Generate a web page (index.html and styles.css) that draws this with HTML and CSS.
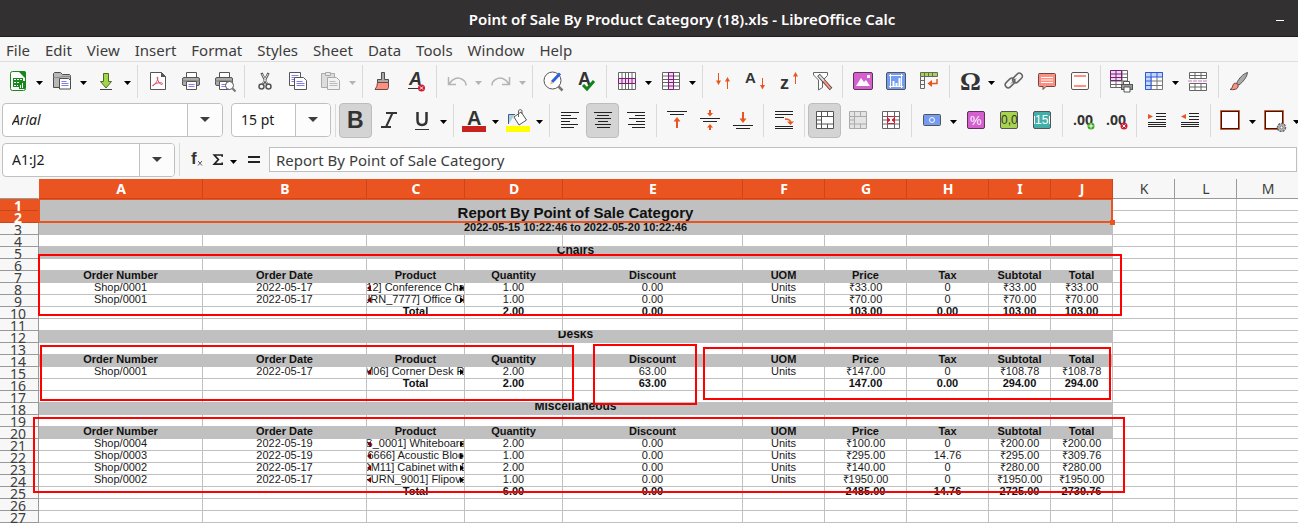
FILE: index.html
```html
<!DOCTYPE html>
<html lang="en">
<head>
<meta charset="utf-8">
<title>Point of Sale By Product Category (18).xls - LibreOffice Calc</title>
<link rel="stylesheet" href="styles.css">
</head>
<body>
<svg class="defs" aria-hidden="true">
<symbol id="dd" viewBox="0 0 11 24"><path d="M2 12h7l-3.500 4z" fill="currentColor"/></symbol>
<symbol id="tri" viewBox="0 0 12 8"><path d="M1 1h10l-5 5z" fill="#3d3d3d"/></symbol>
</svg>
<header class="titlebar">
<h1>Point of Sale By Product Category (18).xls - LibreOffice Calc</h1>
<button class="minimize" aria-label="Minimize"></button>
</header>
<nav class="menubar">
<button>File</button><button>Edit</button><button>View</button><button>Insert</button><button>Format</button><button>Styles</button><button>Sheet</button><button>Data</button><button>Tools</button><button>Window</button><button>Help</button>
</nav>

<div class="toolbar standard" role="toolbar" aria-label="Standard">
<button class="tool" aria-label="New"><svg viewBox="0 0 24 24"><rect x="4.500" y="2.500" width="15" height="19" rx="2" fill="#fff" stroke="#18871c" /><path d="M12 2h6a2 2 0 0 1 2 2v6z" fill="#18871c"/><path d="M7 9h10v3h2v8h-6v-2H7z" fill="#18871c"/><path d="M8 10.500h2m1 0h2m1 0h2M8 13.500h2m1 0h2M8 16.500h2m1 0h1M14.500 19v-3m2 3v-5" stroke="#fff"/></svg></button>
<button class="arrow" aria-label="New options"><svg><use href="#dd"/></svg></button>
<button class="tool" aria-label="Open"><svg viewBox="0 0 24 24"><path d="M3.500 18.500v-14l1-1h6l2 2h7l1 1v12z" fill="#b8b8b8" stroke="#4d4d4d"/><path d="M3.500 8.500h6l2-1h9" fill="none" stroke="#8a8a8a"/><path d="M9.500 9.500h9l2 2v8.500h-11z" fill="#fff" stroke="#4d4d4d"/><path d="M11.500 12.500h5m-5 2h7m-7 2h7" stroke="#8080e8"/></svg></button>
<button class="arrow" aria-label="Open options"><svg><use href="#dd"/></svg></button>
<button class="tool" aria-label="Save"><svg viewBox="0 0 24 24"><path d="M9.500 4.500h5v8h3L12 19l-5.500-6.500h3z" fill="#a4d34e" stroke="#4b6b1f"/><path d="M6 20.500h12" stroke="#444"/></svg></button>
<button class="arrow" aria-label="Save options"><svg><use href="#dd"/></svg></button>
<i class="sep"></i>
<button class="tool" aria-label="Export as PDF"><svg viewBox="0 0 24 24"><path d="M4.500 3.500h11l4 4v13h-15z" fill="#fff" stroke="#555"/><path d="M15 3v5h5z" fill="#555"/><path d="M11 8c2 0 0 6-4 9-1 0 0-2 5-3s5 1 4 1.500-4-2-5-7.500z" fill="none" stroke="#e0475c"/></svg></button>
<button class="tool" aria-label="Print"><svg viewBox="0 0 24 24"><path d="M7.500 8V3.500h10V8" fill="#fff" stroke="#555"/><rect x="3.500" y="8.500" width="17" height="8" rx="1.500" fill="#aaa" stroke="#555"/><path d="M3 12h18" stroke="#777"/><path d="M7.500 12.500h10v8h-10z" fill="#fff" stroke="#555"/><path d="M9.500 15.500h6m-6 2h6" stroke="#8080e8"/></svg></button>
<button class="tool" aria-label="Print preview"><svg viewBox="0 0 24 24"><path d="M7.500 8V3.500h10V8" fill="#fff" stroke="#555"/><rect x="3.500" y="8.500" width="17" height="8" rx="1.500" fill="#aaa" stroke="#555"/><path d="M3 12h18" stroke="#777"/><path d="M7.500 12.500h10v8h-10z" fill="#fff" stroke="#555"/><path d="M9.500 15.500h5m-5 2h5" stroke="#8080e8"/><circle cx="17.500" cy="16.500" r="4" fill="#fff" stroke="#555"/><path d="m20.500 19.500 3 3" stroke="#777" stroke-width="2"/></svg></button>
<i class="sep"></i>
<button class="tool" aria-label="Cut"><svg viewBox="0 0 24 24"><path d="m8.500 4 6 12m1-12-6 12" stroke="#555" stroke-width="2.500"/><path d="m9 5 5.500 10m.5-10-5.500 10" stroke="#ddd"/><circle cx="8.500" cy="17.500" r="2.500" fill="none" stroke="#555" stroke-width="1.500"/><circle cx="15.500" cy="17.500" r="2.500" fill="none" stroke="#555" stroke-width="1.500"/></svg></button>
<button class="tool" aria-label="Copy"><svg viewBox="0 0 24 24"><path d="M3.500 3.500h11v13h-11z" fill="#fff" stroke="#555"/><path d="M5.500 6.500h7m-7 2h3m-3 2h3m-3 2h3" stroke="#8080e8"/><path d="M8.500 8.500h9l3 3v9h-12z" fill="#fff" stroke="#555"/><path d="M10.500 12.500h6m-6 2h8m-8 2h8" stroke="#8080e8"/></svg></button>
<button class="tool" aria-label="Paste" disabled><svg viewBox="0 0 24 24"><path d="M2.500 4.500h13v14h-13z" fill="#ddd" stroke="#aaa"/><path d="M6.500 3.500h5v3h-5z" fill="#e8e8e8" stroke="#aaa"/><path d="M8.500 8.500h9l3 3v9h-12z" fill="#f2f2f2" stroke="#aaa"/><path d="M10.500 12.500h6m-6 2h8m-8 2h8" stroke="#bbb"/></svg></button>
<button class="arrow" aria-label="Paste options" disabled><svg><use href="#dd"/></svg></button>
<i class="sep"></i>
<button class="tool" aria-label="Clone formatting"><svg viewBox="0 0 24 24"><path d="M10.500 3.500h3v7h4v3h-11v-3h4z" fill="#aaa" stroke="#4d4d4d"/><path d="M6.500 13.500h11v5l-1 2H4q2.500-3 2.500-7z" fill="#ff8f80" stroke="#6b4a46"/></svg></button>
<button class="tool" aria-label="Clear formatting"><svg viewBox="0 0 24 24"><text x="5" y="16" class="glyph bi" font-size="18">A</text><path d="M4 19.500h11" stroke="#333"/><circle cx="17.500" cy="19" r="3.500" fill="#cc1f36"/><path d="m16 17.500 3 3m0-3-3 3" stroke="#fff"/></svg></button>
<i class="sep"></i>
<button class="tool" aria-label="Undo" disabled><svg viewBox="0 0 24 24"><path d="M3.500 8v7.500H11M4.500 14.500c3-5 8-7 13-4 2 1 3.500 3 3.500 6" fill="none" stroke="#b4b4b4" stroke-width="1.500"/></svg></button>
<button class="arrow" aria-label="Undo history" disabled><svg><use href="#dd"/></svg></button>
<button class="tool" aria-label="Redo" disabled><svg viewBox="0 0 24 24"><path d="M20.500 8v7.500H13m6.500-1c-3-5-8-7-13-4-2 1-3.500 3-3.500 6" fill="none" stroke="#b4b4b4" stroke-width="1.500"/></svg></button>
<button class="arrow" aria-label="Redo history" disabled><svg><use href="#dd"/></svg></button>
<i class="sep"></i>
<button class="tool" aria-label="Find and replace"><svg viewBox="0 0 24 24"><circle cx="11.500" cy="11.500" r="8.500" fill="#fff" stroke="#555"/><path d="m17.500 17.500 4 4" stroke="#777" stroke-width="2.500"/><path d="m11 13 8-8.500" stroke="#2f5fe0" stroke-width="3"/><path d="m9 15.500 1-3.500 2.500 2.300z" fill="#f2b784"/></svg></button>
<button class="tool" aria-label="Spelling"><svg viewBox="0 0 24 24"><text x="4" y="16" class="glyph b" font-size="18">A</text><path d="m9 16 4 4 7-8" fill="none" stroke="#12831a" stroke-width="3"/></svg></button>
<i class="sep"></i>
<button class="tool" aria-label="Row"><svg viewBox="0 0 24 24"><path d="M3.500 3.500h17v17h-17zM7 3.500v17m3.500-17v17m3-17v17m3.500-17v17" fill="#fff" stroke="#666"/><path d="M3.500 9.500h17v5h-17zM7 9v6m3.500-6v6m3-6v6m3.500-6v6" fill="#f0d8f0" stroke="#7b1f76"/></svg></button>
<button class="arrow" aria-label="Row options"><svg><use href="#dd"/></svg></button>
<button class="tool" aria-label="Column"><svg viewBox="0 0 24 24"><path d="M3.500 3.500h17v17h-17zM3.500 7h17m-17 3.500h17m-17 3h17m-17 3.500h17" fill="#fff" stroke="#666"/><path d="M9.500 3.500v17h5v-17zM9 7h6m-6 3.500h6m-6 3h6M9 17h6" fill="#f0d8f0" stroke="#7b1f76"/></svg></button>
<button class="arrow" aria-label="Column options"><svg><use href="#dd"/></svg></button>
<i class="sep"></i>
<button class="tool" aria-label="Sort"><svg viewBox="0 0 24 24"><path d="M7.500 4v11m9-6v11" stroke="#e95420"/><path d="M5 11.500h5L7.500 16zM14 12.500h5L16.500 8z" fill="#e95420"/></svg></button>
<button class="tool" aria-label="Sort ascending"><svg viewBox="0 0 24 24"><text x="1" y="14" class="glyph b" font-size="15">A</text><path d="M18.500 9v9" stroke="#e95420"/><path d="M16 16h5l-2.500 4.500z" fill="#e95420"/></svg></button>
<button class="tool" aria-label="Sort descending"><svg viewBox="0 0 24 24"><text x="3" y="20" class="glyph b" font-size="18">z</text><path d="M18.500 6v9" stroke="#e95420"/><path d="M16 7.500h5L18.500 3z" fill="#e95420"/></svg></button>
<button class="tool" aria-label="AutoFilter"><svg viewBox="0 0 24 24"><path d="M3.500 3.500h14v3l-5 5v7l-4 2.500v-10l-5-5z" fill="#fff" stroke="#666"/><path d="m8.500 6 12.500 14" stroke="#444" stroke-width="3.500"/><path d="m9 6.500 5 5.500" stroke="#ddd" stroke-width="2"/><path d="m14 12 6.500 7.500" stroke="#ff8f80" stroke-width="2"/></svg></button>
<i class="sep"></i>
<button class="tool" aria-label="Insert image"><svg viewBox="0 0 24 24"><rect x="2.500" y="3.500" width="19" height="17" rx="1.500" fill="#d65fd0" stroke="#5a3358"/><path d="m5 17 5-8 3 4 2-2 4 6zM16 6h3v3h-3z" fill="#fff"/></svg></button>
<button class="tool" aria-label="Insert chart"><svg viewBox="0 0 24 24"><rect x="2.500" y="3.500" width="19" height="17" rx="1.500" fill="#739cf2" stroke="#555"/><path d="M5 6.500h14M5 17.500h14M6.500 5v14m11-14v14" stroke="#fff"/><path d="M9.500 17v-5m3 5v-3m3 3V9" stroke="#fff" stroke-width="2"/></svg></button>
<button class="tool" aria-label="Insert pivot table"><svg viewBox="0 0 24 24"><path d="M3.500 3.500h17v4h-17z" fill="#a8d34f" stroke="#666"/><path d="M3.500 7.500v12h4v-12m-4 4h4m-4 4h4m0-12v4m4-4v4m4-4v4" fill="none" stroke="#666"/><path d="M20 10v4.500h-6" fill="none" stroke="#e95420" stroke-width="1.500"/><path d="M15 11v7l-4.500-3.500z" fill="#e95420"/></svg></button>
<i class="sep"></i>
<button class="tool" aria-label="Special character"><svg viewBox="0 0 24 24"><text x="2" y="21" class="glyph omega" font-size="26">Ω</text></svg></button>
<button class="arrow" aria-label="Special character options"><svg><use href="#dd"/></svg></button>
<button class="tool" aria-label="Hyperlink"><svg viewBox="0 0 24 24"><g fill="none" stroke="#666" stroke-width="1.500"><rect x="2.500" y="11" width="11" height="6" rx="3" transform="rotate(-45 8 14)"/><rect x="10" y="6" width="11" height="6" rx="3" transform="rotate(-45 15.500 9)"/></g><path d="m9 14.500 5-5" stroke="#666"/></svg></button>
<button class="tool" aria-label="Insert comment"><svg viewBox="0 0 24 24"><path d="M4 4.500h15.500q1 0 1 1v11q0 1-1 1H11l-3 3v-3H4.500q-1 0-1-1v-11q0-1 1-1" fill="#ff8f80" stroke="#6b4a46"/><path d="M6 8.500h12m-12 2.500h12m-12 2.500h12" stroke="#fff"/></svg></button>
<button class="tool" aria-label="Headers and footers"><svg viewBox="0 0 24 24"><rect x="3.500" y="3.500" width="17" height="17" rx="1.500" fill="#fff" stroke="#555"/><path d="M6 7h12M6 17h12" stroke="#ff8f80" stroke-width="2"/></svg></button>
<i class="sep"></i>
<button class="tool" aria-label="Define print area"><svg viewBox="0 0 24 24"><path d="M1.500 1.500h17v17h-17zM1.500 5h17m-17 3.500h17m-17 3.500h17m-17 3.500h17M7 1.500v17m6-17v17" fill="#fff" stroke="#666"/><path d="M1.500 1.500h11v10h-11zM1.500 5h11m-11 3.500h11m-5.500-7v10" fill="#f0d8f0" stroke="#7b1f76"/><path d="M14.500 15.500v-3h6v3" fill="#fff" stroke="#555"/><rect x="12.500" y="15.500" width="11" height="5" fill="#999" stroke="#555"/><path d="M15 18h6v5h-6z" fill="#fff" stroke="#555"/></svg></button>
<button class="tool" aria-label="Freeze rows and columns"><svg viewBox="0 0 24 24"><path d="M3.500 3.500h17v17h-17zM9 3.500v17m6-17v17M3.500 12h17m-17 4.500h17" fill="#fff" stroke="#777"/><path d="M3.500 3.500h17v4.500H9v12.500H3.500zM3.500 8H9m-5.500 4H9m-5.500 4.500H9M9 3.500V8m6-4.500V8" fill="#c6d6fa" stroke="#2a5bd7"/></svg></button>
<button class="arrow" aria-label="Freeze options"><svg><use href="#dd"/></svg></button>
<button class="tool" aria-label="Split window"><svg viewBox="0 0 24 24"><path d="M3.500 3.500h17v6h-17zM3.500 6.500h17M9 3.500v6m6-6v6M3.500 14.500h17v7h-17zM3.500 18h17M9 14.500v7m6-7v7" fill="#fff" stroke="#666"/><path d="M2 12h20" stroke="#d17bc0" stroke-dasharray="4 1"/></svg></button>
<i class="sep"></i>
<button class="tool" aria-label="Show draw functions"><svg viewBox="0 0 24 24"><path d="M9.500 14.500C12 9 16 5 20.500 3.500 20 8 16 13 12 16z" fill="#aaa" stroke="#555"/><path d="M3 20.500c3-1 2-4 4-6 2-1 5 1 4 3.500-1 2.500-4 3-8 2.500z" fill="#ff8f80" stroke="#6b4a46"/></svg></button>
</div>

<div class="toolbar formatting" role="toolbar" aria-label="Formatting">
<div class="combo font-name"><input type="text" value="Arial" aria-label="Font name"><button aria-label="Font list"><svg><use href="#tri"/></svg></button></div>
<div class="combo font-size"><input type="text" value="15 pt" aria-label="Font size"><button aria-label="Size list"><svg><use href="#tri"/></svg></button></div>
<i class="sep"></i>
<button class="tool on" aria-label="Bold" aria-pressed="true"><svg viewBox="0 0 24 24"><text x="3" y="20" class="glyph b" font-size="23">B</text></svg></button>
<button class="tool" aria-label="Italic"><svg viewBox="0 0 24 24"><path d="M9 5h11M4 19h10M15.500 5 9 19" stroke="#333" stroke-width="2"/></svg></button>
<button class="tool" aria-label="Underline"><svg viewBox="0 0 24 24"><path d="M7.500 4v8q0 5 4.500 5t4.500-5V4" fill="none" stroke="#333" stroke-width="2.500"/><path d="M5 21.500h14" stroke="#333"/></svg></button>
<button class="arrow" aria-label="Underline options"><svg><use href="#dd"/></svg></button>
<i class="sep"></i>
<button class="tool" aria-label="Font color"><svg viewBox="0 0 24 24"><text x="5" y="17" class="glyph b" font-size="20">A</text><path d="M0 18h24v6H0z" fill="#c9211e"/></svg></button>
<button class="arrow" aria-label="Font color options"><svg><use href="#dd"/></svg></button>
<button class="tool" aria-label="Background color"><svg viewBox="0 0 24 24"><path d="M2.500 16V6.500H9" fill="#9fd4e8" stroke="#557"/><path d="m8 9 7-5 5.500 8-7.500 5z" fill="#fff" stroke="#555"/><path d="M12.500 9V2.500q1.500-2 3.500 0V6" fill="none" stroke="#666"/><path d="M0 18h24v6H0z" fill="#ff0"/></svg></button>
<button class="arrow" aria-label="Background color options"><svg><use href="#dd"/></svg></button>
<i class="sep"></i>
<button class="tool" aria-label="Align left"><svg viewBox="0 0 24 24"><path d="M3 4.500h18M3 7.500h10M3 10.500h16M3 13.500h9M3 16.500h17M3 19.500h13" stroke="#222"/></svg></button>
<button class="tool on" aria-label="Center horizontally" aria-pressed="true"><svg viewBox="0 0 24 24"><path d="M3 4.500h18M6 7.500h12M4 10.500h16M7 13.500h10M4 16.500h16M6 19.500h13" stroke="#222"/></svg></button>
<button class="tool" aria-label="Align right"><svg viewBox="0 0 24 24"><path d="M3 4.500h18M11 7.500h10M5 10.500h16M12 13.500h9M4 16.500h17M8 19.500h13" stroke="#222"/></svg></button>
<i class="sep"></i>
<button class="tool" aria-label="Align top"><svg viewBox="0 0 24 24"><path d="M2 3.500h20M5 6.500h14" stroke="#222"/><path d="M12 20v-9" stroke="#e95420" stroke-width="2"/><path d="M8.500 13.500h7L12 9z" fill="#e95420"/></svg></button>
<button class="tool" aria-label="Center vertically"><svg viewBox="0 0 24 24"><path d="M2 10.500h20M5 13.500h14" stroke="#222"/><path d="M12 2v4m0 12v4" stroke="#e95420" stroke-width="2"/><path d="M9 5h6l-3 3.500zM9 19.500h6L12 16z" fill="#e95420"/></svg></button>
<button class="tool" aria-label="Align bottom"><svg viewBox="0 0 24 24"><path d="M2 17.500h20M5 20.500h14" stroke="#222"/><path d="M12 4v8" stroke="#e95420" stroke-width="2"/><path d="M8.500 10.500h7L12 15z" fill="#e95420"/></svg></button>
<i class="sep"></i>
<button class="tool" aria-label="Wrap text"><svg viewBox="0 0 24 24"><path d="M3 3.500h18M3 6.500h18M3 9.500h9M3 18.500h18M3 20.500h18" stroke="#222"/><path d="M13 11q5 0 5.500 3" fill="none" stroke="#e95420" stroke-width="1.500"/><path d="M15 13.500h7L18.500 17z" fill="#e95420"/></svg></button>
<i class="sep"></i>
<button class="tool on" aria-label="Merge and center cells" aria-pressed="true"><svg viewBox="0 0 24 24"><path d="M3.500 3.500h17v17h-17zM3.500 8.500h17m-17 7.500h17M8.500 3.500v17m6-17v5m0 7.500v4.500M3.500 12h5" fill="#fff" stroke="#555"/></svg></button>
<button class="tool" aria-label="Merge cells" disabled><svg viewBox="0 0 24 24"><path d="M3.500 3.500h17v17h-17zM3.500 8.500h17m-17 7.500h17M8.500 3.500v17m6-17v5m0 7.500v4.500M3.500 12h5" fill="#e4e4e4" stroke="#aaa"/></svg></button>
<button class="tool" aria-label="Unmerge cells"><svg viewBox="0 0 24 24"><path d="M3.500 3.500h17v17h-17zM3.500 8.500h17m-17 7.500h17M8.500 3.500v17m7-17v17M3.500 12h17" fill="#fff" stroke="#666"/><path d="M8.500 8.500h7v7h-7z" fill="#fff" stroke="#cc1f36"/><path d="M9 10.500v3l2-1.500zm6 0v3l-2-1.500z" fill="#cc1f36" stroke="#cc1f36"/></svg></button>
<i class="sep"></i>
<button class="tool" aria-label="Format as currency"><svg viewBox="0 0 24 24"><rect x="3.500" y="6.500" width="17" height="11" rx="1" fill="#739cf2" stroke="#555"/><circle cx="12" cy="12" r="2.500" fill="none" stroke="#fff"/></svg></button>
<button class="arrow" aria-label="Currency options"><svg><use href="#dd"/></svg></button>
<button class="tool" aria-label="Format as percent"><svg viewBox="0 0 24 24"><rect x="3.500" y="3.500" width="17" height="17" rx="1.500" fill="#d65fd0" stroke="#5a3358"/><text x="6" y="17" class="glyph light" font-size="13">%</text></svg></button>
<button class="tool" aria-label="Format as number"><svg viewBox="0 0 24 24"><rect x="3.500" y="3.500" width="17" height="17" rx="1.500" fill="#a8d34f" stroke="#555"/><text x="4" y="16" class="glyph" font-size="12">0,0</text></svg></button>
<button class="tool" aria-label="Format as date"><svg viewBox="0 0 24 24"><rect x="3.500" y="3.500" width="17" height="17" rx="1.500" fill="#42b0a8" stroke="#555"/><text x="5" y="16" class="glyph light" font-size="12">15</text><path d="M4.500 8v8m15-8v8" stroke="#fff"/></svg></button>
<i class="sep"></i>
<button class="tool" aria-label="Add decimal place"><svg viewBox="0 0 24 24"><text x="2" y="17" class="glyph b narrow" font-size="14">.00</text><circle cx="20" cy="18" r="3.500" fill="#38a51c"/><path d="M17.500 18h5M20 15.500v5" stroke="#fff"/></svg></button>
<button class="tool" aria-label="Delete decimal place"><svg viewBox="0 0 24 24"><text x="2" y="17" class="glyph b narrow" font-size="14">.00</text><circle cx="20" cy="18" r="3.500" fill="#cc1f36"/><path d="m18.500 16.500 3 3m0-3-3 3" stroke="#fff"/></svg></button>
<i class="sep"></i>
<button class="tool" aria-label="Increase indent"><svg viewBox="0 0 24 24"><path d="M11 5.500h10M11 8.500h10M11 11.500h10M3 14.500h18M3 16.500h18M3 18.500h18" stroke="#222"/><path d="M3 6v5l5-2.500z" fill="#e95420"/></svg></button>
<button class="tool" aria-label="Decrease indent"><svg viewBox="0 0 24 24"><path d="M11 5.500h10M11 8.500h10M11 11.500h10M3 14.500h18M3 16.500h18M3 18.500h18" stroke="#222"/><path d="M8 6v5L3 8.500z" fill="#e95420"/></svg></button>
<i class="sep"></i>
<button class="tool" aria-label="Borders"><svg viewBox="0 0 24 24"><path d="M1.500 2.500h19v19h-19z" fill="#222" stroke="#e95420"/><path d="M3 4h16v16H3z" fill="#fff"/></svg></button>
<button class="arrow" aria-label="Border options"><svg><use href="#dd"/></svg></button>
<button class="tool" aria-label="Border style"><svg viewBox="0 0 24 24"><path d="M1.500 2.500h19v19h-19z" fill="#222" stroke="#e95420"/><path d="M3 4h16v16H3z" fill="#fff"/><circle cx="18.500" cy="19.500" r="4" fill="#bbb" stroke="#666" stroke-width="1.500" stroke-dasharray="2 1"/><circle cx="18.500" cy="19.500" r="1.500" fill="#fff" stroke="#777"/></svg></button>
<button class="arrow" aria-label="Border style options"><svg><use href="#dd"/></svg></button>
</div>

<div class="formula-bar">
<div class="combo name-box"><input type="text" value="A1:J2" aria-label="Name box"><button aria-label="Named ranges"><svg><use href="#tri"/></svg></button></div>
<i class="sep"></i>
<button class="fn" aria-label="Function wizard"><svg viewBox="0 0 24 24"><text x="7" y="16" class="glyph b" font-size="17">f</text><path d="m14 13 4 4.500m0-4.500-4 4.500" stroke="#555"/></svg></button>
<button class="fn sum" aria-label="Select function"><svg viewBox="0 0 24 24"><path d="M17 8V6H7.500l5 5.500-5 5.500H17v-2" fill="none" stroke="#222" stroke-width="2"/></svg></button>
<button class="arrow" aria-label="Function list"><svg><use href="#dd"/></svg></button>
<button class="fn eq" aria-label="Formula"><svg viewBox="0 0 24 24"><path d="M6 9h12m-12 5h12" stroke="#222" stroke-width="2"/></svg></button>
<input class="formula" type="text" value="Report By Point of Sale Category" aria-label="Input line">
</div>

<main class="sheet">
<table>
<colgroup><col class="w39"><col class="w164"><col class="w164"><col class="w98"><col class="w98"><col class="w180"><col class="w82"><col class="w82"><col class="w82"><col class="w62"><col class="w62"><col class="w62"><col class="w62"><col class="w62"></colgroup>
<thead><tr><th><th class="sel">A<th class="sel">B<th class="sel">C<th class="sel">D<th class="sel">E<th class="sel">F<th class="sel">G<th class="sel">H<th class="sel">I<th class="sel">J<th>K<th>L<th>M</tr></thead>
<tbody>
<tr><th class="sel">1<td class="title" colspan="10" rowspan="2">Report By Point of Sale Category<td><td><td></tr>
<tr><th class="sel">2<td><td><td></tr>
<tr><th>3<td class="band" colspan="10">2022-05-15 10:22:46 to 2022-05-20 10:22:46<td><td><td></tr>
<tr><th>4<td><td><td><td><td><td><td><td><td><td><td><td><td></tr>
<tr><th>5<td class="band category" colspan="10">Chairs<td><td><td></tr>
<tr><th>6<td><td><td><td><td><td><td><td><td><td><td><td><td></tr>
<tr class="heads"><th>7<td>Order Number<td>Order Date<td>Product<td>Quantity<td>Discount<td>UOM<td>Price<td>Tax<td>Subtotal<td>Total<td><td><td></tr>
<tr><th>8<td>Shop/0001<td>2022-05-17<td><div class="clip">12] Conference Cha</div><td>1.00<td>0.00<td>Units<td>₹33.00<td>0<td>₹33.00<td>₹33.00<td><td><td></tr>
<tr><th>9<td>Shop/0001<td>2022-05-17<td><div class="clip">URN_7777] Office Ch</div><td>1.00<td>0.00<td>Units<td>₹70.00<td>0<td>₹70.00<td>₹70.00<td><td><td></tr>
<tr class="total"><th>10<td><td><td>Total<td>2.00<td>0.00<td><td>103.00<td>0.00<td>103.00<td>103.00<td><td><td></tr>
<tr><th>11<td><td><td><td><td><td><td><td><td><td><td><td><td></tr>
<tr><th>12<td class="band category" colspan="10">Desks<td><td><td></tr>
<tr><th>13<td><td><td><td><td><td><td><td><td><td><td><td><td></tr>
<tr class="heads"><th>14<td>Order Number<td>Order Date<td>Product<td>Quantity<td>Discount<td>UOM<td>Price<td>Tax<td>Subtotal<td>Total<td><td><td></tr>
<tr><th>15<td>Shop/0001<td>2022-05-17<td><div class="clip">M06] Corner Desk Ri</div><td>2.00<td>63.00<td>Units<td>₹147.00<td>0<td>₹108.78<td>₹108.78<td><td><td></tr>
<tr class="total"><th>16<td><td><td>Total<td>2.00<td>63.00<td><td>147.00<td>0.00<td>294.00<td>294.00<td><td><td></tr>
<tr><th>17<td><td><td><td><td><td><td><td><td><td><td><td><td></tr>
<tr><th>18<td class="band category" colspan="10">Miscellaneous<td><td><td></tr>
<tr><th>19<td><td><td><td><td><td><td><td><td><td><td><td><td></tr>
<tr class="heads"><th>20<td>Order Number<td>Order Date<td>Product<td>Quantity<td>Discount<td>UOM<td>Price<td>Tax<td>Subtotal<td>Total<td><td><td></tr>
<tr><th>21<td>Shop/0004<td>2022-05-19<td><div class="clip">S_0001] Whiteboard</div><td>2.00<td>0.00<td>Units<td>₹100.00<td>0<td>₹200.00<td>₹200.00<td><td><td></tr>
<tr><th>22<td>Shop/0003<td>2022-05-19<td><div class="clip">6666] Acoustic Bloc</div><td>1.00<td>0.00<td>Units<td>₹295.00<td>14.76<td>₹295.00<td>₹309.76<td><td><td></tr>
<tr><th>23<td>Shop/0002<td>2022-05-17<td><div class="clip">OM11] Cabinet with D</div><td>2.00<td>0.00<td>Units<td>₹140.00<td>0<td>₹280.00<td>₹280.00<td><td><td></tr>
<tr><th>24<td>Shop/0002<td>2022-05-17<td><div class="clip">FURN_9001] Flipove</div><td>1.00<td>0.00<td>Units<td>₹1950.00<td>0<td>₹1950.00<td>₹1950.00<td><td><td></tr>
<tr class="total"><th>25<td><td><td>Total<td>6.00<td>0.00<td><td>2485.00<td>14.76<td>2725.00<td>2739.76<td><td><td></tr>
<tr><th>26<td><td><td><td><td><td><td><td><td><td><td><td><td></tr>
<tr><th>27<td><td><td><td><td><td><td><td><td><td><td><td><td></tr>
</tbody>
</table>
<div class="mark chairs"></div>
<div class="mark desks-order"></div>
<div class="mark desks-discount"></div>
<div class="mark desks-price"></div>
<div class="mark misc"></div>
</main>
</body>
</html>
```
FILE: styles.css
```css
* { box-sizing: border-box; }
body {
  margin: 0;
  height: 100vh;
  display: flex;
  flex-direction: column;
  overflow: hidden;
  background: #f7f7f7;
  color: #3d3d3d;
  font: 14px/20px "Noto Sans", sans-serif;
}
button, input { font: inherit; color: inherit; margin: 0; padding: 0; border: 0; background: none; }
.defs { display: none; }

.titlebar {
  display: flex;
  align-items: center;
  justify-content: center;
  position: relative;
  flex: none;
  height: 37px;
  padding: 2px 0 0 66px;
  background: #333031;
  border-bottom: 1px solid #1f1d1e;
  color: #fff;
}
.titlebar h1 { margin: 0; font-size: 15px; line-height: 20px; font-weight: 600; }
.minimize { position: absolute; right: 14px; top: 8px; width: 8px; height: 13px; border-bottom: 1px solid #fff; }

.menubar {
  display: flex;
  flex: none;
  gap: 15px;
  height: 25px;
  padding: 1px 6px 0;
  border-bottom: 1px solid #dcdcdc;
  font-size: 15px;
}

.toolbar, .formula-bar { display: flex; align-items: center; flex: none; overflow: hidden; padding-left: 2px; }
.standard { height: 38px; padding-left: 1px; }
.formatting { height: 40px; }
.formula-bar { height: 39px; padding-right: 1px; }
.toolbar > *, .formula-bar > * { flex: none; }
.tool { display: flex; align-items: center; justify-content: center; width: 33px; height: 35px; border: 1px solid transparent; border-radius: 4px; }
.tool svg, .fn svg { width: 24px; height: 24px; fill: none; }
.tool.on { background: #d4d4d4; border-color: #bdbdbd; }
.arrow { display: flex; align-items: center; width: 11px; height: 34px; color: #000; }
.arrow:disabled { color: #b4b4b4; }
.arrow svg { width: 11px; height: 24px; }
.sep { width: 8px; height: 33px; background: linear-gradient(#dadada, #dadada) center / 1px 100% no-repeat; }

.glyph { fill: #333; font-family: "Liberation Sans", sans-serif; }
.light { fill: #fff; }
.b { font-weight: 700; }
.bi { font-weight: 700; font-style: italic; }
.narrow { font-family: "Open Sans", sans-serif; }
.omega { font-family: "Liberation Serif", serif; font-weight: 700; }

.combo { display: flex; height: 34px; background: #fff; border: 1px solid #c0c0c0; border-radius: 4px; color: #1a1a1a; overflow: hidden; }
.combo input { flex: 1; min-width: 0; padding-left: 9px; }
.combo button { display: flex; align-items: center; justify-content: center; width: 35px; border-left: 1px solid #c0c0c0; background: #fcfcfc; }
.combo svg { width: 12px; height: 8px; }
.font-name { width: 221px; margin-right: 8px; }
.font-name input { font-style: italic; }
.font-size { width: 100px; }
.name-box { width: 173px; }

.fn { display: flex; justify-content: center; width: 25px; }
.sum { width: 20px; }
.eq { width: 30px; }
.formula-bar .formula { flex: 1; height: 25px; padding: 0 6px; border: 1px solid #c0c0c0; background: #fff; color: #3d3d3d; font-size: 15px; }

.sheet { position: relative; flex: 1; min-height: 0; overflow: hidden; background: #fff; }
table { table-layout: fixed; width: 1299px; border-collapse: separate; border-spacing: 0; }
.w39 { width: 39px; }
.w62 { width: 62px; }
.w82 { width: 82px; }
.w98 { width: 98px; }
.w164 { width: 164px; }
.w180 { width: 180px; }
th, td { padding: 0; border: solid #c0c0c0; border-width: 0 1px 1px 0; text-align: center; white-space: nowrap; }
th { background: #f7f7f7; border-color: #999; font-weight: 400; color: #3d3d3d; }
thead th { height: 20px; line-height: 19px; padding-left: 1px; }
thead th:first-child { border-color: #f7f7f7 #f7f7f7 #999 #f7f7f7; }
th.sel { background: #e95420; border-color: #c9471b; color: #fff; font-weight: 700; }
tbody tr { height: 12px; }
tbody th { line-height: 9px; padding: 2px 2px 0 0; }
td { font: 11px/8px "Liberation Sans", Arial, sans-serif; color: #1a1a1a; vertical-align: top; }
.title { position: relative; padding-top: 5px; background: #c0c0c0; font-size: 15px; line-height: 17px; font-weight: 700; color: #111; }
.title::before { content: ""; position: absolute; inset: 0 -1px -1px -1px; border: solid #e95420; border-width: 1px 2px 2px; }
.title::after { content: ""; position: absolute; right: -3px; bottom: -3px; width: 5px; height: 5px; background: #e95420; }
.band { background: #c0c0c0; font-weight: 700; color: #111; }
.category { overflow: hidden; font-size: 12px; line-height: 6px; }
.heads td, .total td { font-weight: 700; color: #111; }
.heads td:nth-child(-n+11) { background: #c0c0c0; border-color: #c0c0c0; }
.clip { position: relative; display: flex; justify-content: center; height: 11px; overflow: hidden; }
.clip::before, .clip::after { content: ""; position: absolute; top: 2px; width: 0; height: 0; border: 0 solid transparent; border-top-width: 3px; border-bottom-width: 3px; }
.clip::before { left: 0; border-right: 4px solid #700; }
.clip::after { right: 0; border-left: 4px solid #000; }

.mark { position: absolute; border: 2px solid #f00; pointer-events: none; }
.chairs { left: 38px; top: 75px; width: 1084px; height: 62px; }
.desks-order { left: 40px; top: 166px; width: 534px; height: 56px; }
.desks-discount { left: 593px; top: 165px; width: 104px; height: 61px; }
.desks-price { left: 703px; top: 168px; width: 408px; height: 53px; }
.misc { left: 33px; top: 238px; width: 1092px; height: 76px; }
```
